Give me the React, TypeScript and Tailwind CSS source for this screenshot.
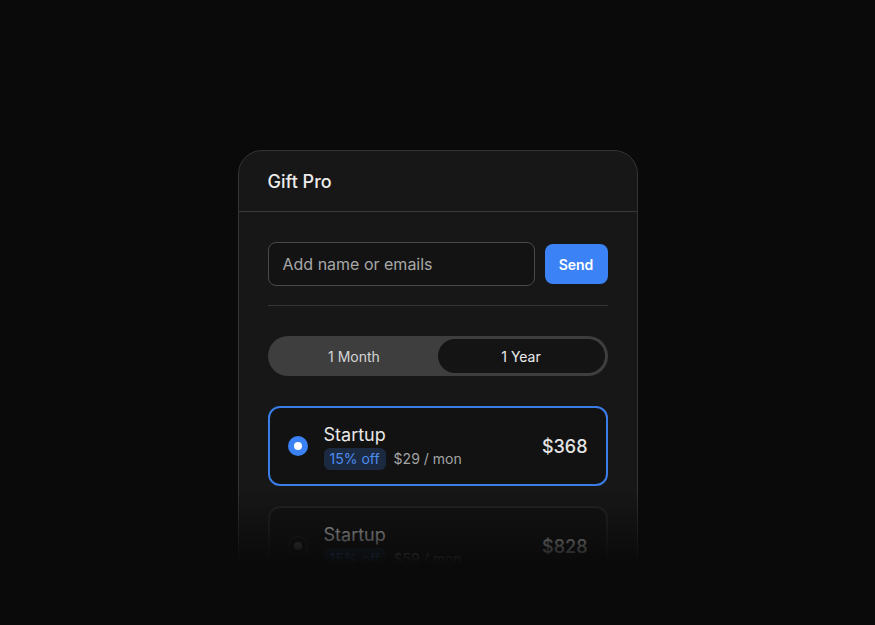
import { useState } from "react";

type Plan = { id: string; name: string; off: string; monthly: string; total: string };

const plans: Plan[] = [
  { id: "a", name: "Startup", off: "15% off", monthly: "$29 / mon", total: "$368" },
  { id: "b", name: "Startup", off: "15% off", monthly: "$59 / mon", total: "$828" },
];

function Radio({ on }: { on: boolean }) {
  if (on) {
    return (
      <div className="flex h-5 w-5 shrink-0 items-center justify-center rounded-full bg-[#3b82f6]">
        <div className="h-2 w-2 rounded-full bg-white" />
      </div>
    );
  }
  return (
    <div className="flex h-5 w-5 shrink-0 items-center justify-center rounded-full border border-[#2e2e2e]">
      <div className="h-2 w-2 rounded-full bg-[#5a5a5a]" />
    </div>
  );
}

function PlanRow({ plan, on }: { plan: Plan; on: boolean }) {
  return (
    <div
      className={`flex h-20 items-center rounded-xl border-2 pl-[18px] pr-[18px] ${
        on ? "border-[#3a7de6] bg-[#121212]" : "border-[#262626] bg-[#141414]"
      }`}
    >
      <Radio on={on} />
      <div className="ml-4 flex flex-1 flex-col">
        <div className="text-[18px] leading-6 text-[#e8e8e8]">{plan.name}</div>
        <div className="mt-[1px] flex items-center gap-2">
          <span className="rounded-md bg-[#1b2a40] px-[6px] py-[1px] text-[14px] leading-5 text-[#4d8cf0]">
            {plan.off}
          </span>
          <span className="text-[14px] text-[#a3a3a3]">{plan.monthly}</span>
        </div>
      </div>
      <div className="text-[18px] font-medium text-[#e5e5e5]">{plan.total}</div>
    </div>
  );
}

export default function App() {
  const [period, setPeriod] = useState<"month" | "year">("year");

  return (
    <div
      className="relative h-screen overflow-hidden bg-[#0a0a0a]"
      style={{ fontFamily: "Inter, 'Noto Sans', sans-serif" }}
    >
      <div className="flex justify-center pt-[150px]">
        <div className="w-[400px] rounded-t-3xl border border-[#343434] bg-[#171717]">
          <div className="flex h-[61px] items-center border-b border-[#3a3a3a] px-[29px]">
            <h1 className="text-[18px] font-medium text-[#ececec]">Gift Pro</h1>
          </div>

          <div className="px-[29px] pt-[30px] pb-10">
            <div className="flex items-center gap-[10px]">
              <input
                className="h-11 min-w-0 flex-1 rounded-lg border border-[#4a4a4a] bg-[#131313] px-[14px] text-[16px] text-[#e5e5e5] outline-none placeholder:text-[#a8a8a8]"
                placeholder="Add name or emails"
              />
              <button className="h-10 w-[63px] shrink-0 rounded-lg bg-[#3b82f6] text-[14px] font-semibold text-white">
                Send
              </button>
            </div>

            <div className="mt-[19px] h-px bg-[#343434]" />

            <div className="mt-[30px] flex h-10 rounded-full bg-[#3e3e3e] p-[3px]">
              <button
                onClick={() => setPeriod("month")}
                className={`flex-1 rounded-full text-[14px] ${
                  period === "month" ? "bg-[#141414] text-[#ececec]" : "text-[#d6d6d6]"
                }`}
              >
                1 Month
              </button>
              <button
                onClick={() => setPeriod("year")}
                className={`flex-1 rounded-full text-[14px] ${
                  period === "year" ? "bg-[#141414] text-[#ececec]" : "text-[#d6d6d6]"
                }`}
              >
                1 Year
              </button>
            </div>

            <div className="mt-[30px] flex flex-col gap-5">
              {plans.map((p, i) => (
                <PlanRow key={p.id} plan={p} on={i === 0} />
              ))}
            </div>
          </div>
        </div>
      </div>

      {/* bottom fade */}
      <div className="pointer-events-none absolute inset-x-0 top-[488px] bottom-0 flex flex-col">
        <div className="h-[76px] bg-linear-to-b from-[#0a0a0a00] to-[#0a0a0a]" />
        <div className="flex-1 bg-[#0a0a0a]" />
      </div>
    </div>
  );
}
